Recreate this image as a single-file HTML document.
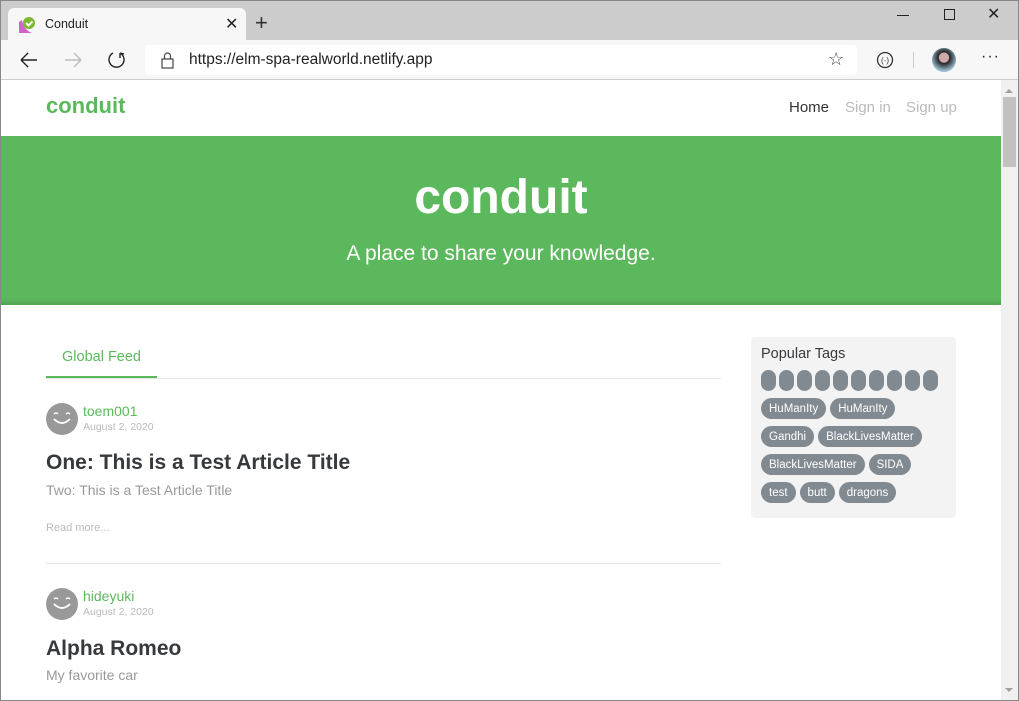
<!DOCTYPE html>
<html><head><meta charset="utf-8"><style>
*{margin:0;padding:0;box-sizing:border-box}
body{width:1019px;height:701px;overflow:hidden;font-family:"Liberation Sans",sans-serif;background:#fff;position:relative}
.a{position:absolute}
.tag{display:flex;align-items:center;background:#818a91;color:#fff;border-radius:11px;font-size:11.5px;padding:0 8px;height:21px}
.row{display:flex;gap:4px;margin-bottom:7px}
</style></head><body>
<div class="a" style="left:0;top:0;width:1019px;height:40px;background:#cccccc"></div>
<div class="a" style="left:8px;top:8px;width:238px;height:33px;background:#f7f7f7;border-radius:6px 6px 0 0"></div>
<svg class="a" style="left:18px;top:16px" width="18" height="18"><path d="M1 6 L1 17 L14 17 Q6 14 4 4 Z" fill="#d065c8"/><circle cx="11" cy="7" r="6" fill="#7cb82f"/><path d="M8 7 l2.5 2.5 4-4" stroke="#fff" stroke-width="2" fill="none"/></svg>
<div class="a" style="left:45px;top:17px;font-size:12.5px;color:#222">Conduit</div>
<div class="a" style="left:225px;top:14px;font-size:16px;color:#222">✕</div>
<div class="a" style="left:255px;top:10px;font-size:22px;color:#333;font-weight:300">+</div>
<div class="a" style="left:897px;top:15px;width:12px;border-top:1px solid #222"></div>
<div class="a" style="left:944px;top:9px;width:11px;height:11px;border:1px solid #222"></div>
<div class="a" style="left:987px;top:4px;font-size:16px;color:#222">✕</div>
<div class="a" style="left:0;top:40px;width:1019px;height:40px;background:#f7f7f7;border-bottom:1px solid #ccc"></div>
<svg class="a" style="left:18px;top:50px" width="22" height="20"><path d="M3 10 H19 M3 10 L10 3 M3 10 L10 17" stroke="#222" stroke-width="1.4" fill="none"/></svg>
<svg class="a" style="left:62px;top:50px" width="22" height="20"><path d="M3 10 H19 M19 10 L12 3 M19 10 L12 17" stroke="#bbb" stroke-width="1.4" fill="none"/></svg>
<svg class="a" style="left:106px;top:49px" width="22" height="22"><path d="M14 4 A7.5 7.5 0 1 1 7 4 M14 4 L14 9 M14 4 L18 5" stroke="#222" stroke-width="1.4" fill="none"/></svg>
<div class="a" style="left:145px;top:45px;width:712px;height:30px;background:#fff;border-radius:4px"></div>
<svg class="a" style="left:160px;top:51px" width="16" height="18"><rect x="2" y="8" width="11" height="9" fill="none" stroke="#444" stroke-width="1.2"/><path d="M4.5 8 V5 a3 3 0 0 1 6 0 V8" fill="none" stroke="#444" stroke-width="1.2"/></svg>
<div class="a" style="left:189px;top:51px;font-size:15.5px;color:#222">https://elm-spa-realworld.netlify.app</div>
<div class="a" style="left:828px;top:49px;font-size:18px;color:#444">☆</div>
<svg class="a" style="left:875px;top:50px" width="20" height="20"><circle cx="10" cy="10" r="7.5" fill="none" stroke="#333" stroke-width="1.3"/><text x="10" y="13" font-size="8" text-anchor="middle" fill="#333">(·)</text></svg>
<div class="a" style="left:913px;top:52px;height:16px;border-left:1px solid #ccc"></div>
<div class="a" style="left:932px;top:48px;width:24px;height:24px;border-radius:50%;background:radial-gradient(circle at 50% 40%,#caa 0 25%,#222 30%,#9bc 70%)"></div>
<div class="a" style="left:981px;top:48px;font-size:16px;color:#222;letter-spacing:1px">···</div>
<div class="a" style="left:1001px;top:80px;width:17px;height:621px;background:#f0f0f0"></div>
<div class="a" style="left:1003px;top:97px;width:13px;height:70px;background:#c1c1c1"></div>
<div class="a" style="left:1005px;top:85px;width:0;height:0;border:4px solid transparent;border-bottom-color:#a0a0a0"></div>
<div class="a" style="left:1005px;top:688px;width:0;height:0;border:4px solid transparent;border-top-color:#a0a0a0"></div>
<div class="a" style="left:46px;top:93px;font-size:22px;font-weight:bold;color:#5cb85c">conduit</div>
<div class="a" style="left:789px;top:99px;font-size:15px;color:#333">Home</div>
<div class="a" style="left:845px;top:99px;font-size:15px;color:#bbb">Sign in</div>
<div class="a" style="left:906px;top:99px;font-size:15px;color:#bbb">Sign up</div>
<div class="a" style="left:1px;top:136px;width:1000px;height:169px;background:#5cb85c;box-shadow:inset 0 -6px 6px -4px rgba(0,0,0,.15)"></div>
<div class="a" style="left:1px;top:170px;width:1000px;text-align:center;font-size:48px;font-weight:bold;color:#fff">conduit</div>
<div class="a" style="left:1px;top:242px;width:1000px;text-align:center;font-size:21px;color:#fff">A place to share your knowledge.</div>
<div class="a" style="left:62px;top:349px;font-size:14.5px;color:#5cb85c">Global Feed</div>
<div class="a" style="left:46px;top:378px;width:675px;border-top:1px solid #e5e5e5"></div>
<div class="a" style="left:46px;top:376px;width:111px;border-top:2px solid #5cb85c"></div>
<svg class="a" style="left:46px;top:403px" width="32" height="32"><circle cx="16" cy="16" r="16" fill="#999"/><path d="M8 16 q8 8 16 0" stroke="#fff" stroke-width="1.8" fill="none"/><path d="M8 11 q2-2 4 0 M20 11 q2-2 4 0" stroke="#fff" stroke-width="1.5" fill="none"/></svg>
<div class="a" style="left:83px;top:403px;font-size:14px;color:#5cb85c">toem001</div>
<div class="a" style="left:83px;top:421px;font-size:10.5px;color:#bbb">August 2, 2020</div>
<div class="a" style="left:46px;top:451px;font-size:21px;font-weight:bold;color:#373a3c">One: This is a Test Article Title</div>
<div class="a" style="left:46px;top:482px;font-size:14px;color:#999">Two: This is a Test Article Title</div>
<div class="a" style="left:46px;top:522px;font-size:11px;color:#bbb">Read more...</div>
<div class="a" style="left:46px;top:563px;width:675px;border-top:1px solid #e5e5e5"></div>
<svg class="a" style="left:46px;top:588px" width="32" height="32"><circle cx="16" cy="16" r="16" fill="#999"/><path d="M8 16 q8 8 16 0" stroke="#fff" stroke-width="1.8" fill="none"/><path d="M8 11 q2-2 4 0 M20 11 q2-2 4 0" stroke="#fff" stroke-width="1.5" fill="none"/></svg>
<div class="a" style="left:83px;top:588px;font-size:14px;color:#5cb85c">hideyuki</div>
<div class="a" style="left:83px;top:606px;font-size:10.5px;color:#bbb">August 2, 2020</div>
<div class="a" style="left:46px;top:637px;font-size:21px;font-weight:bold;color:#373a3c">Alpha Romeo</div>
<div class="a" style="left:46px;top:667px;font-size:14px;color:#999">My favorite car</div>
<div class="a" style="left:751px;top:337px;width:205px;height:181px;background:#f3f3f3;border-radius:4px;padding:9px 0 0 10px">
<div style="font-size:14.5px;color:#373a3c;margin-bottom:8px">Popular Tags</div>
<div class="row" style="gap:3px"><span class="tag" style="width:15px;padding:0"></span><span class="tag" style="width:15px;padding:0"></span><span class="tag" style="width:15px;padding:0"></span><span class="tag" style="width:15px;padding:0"></span><span class="tag" style="width:15px;padding:0"></span><span class="tag" style="width:15px;padding:0"></span><span class="tag" style="width:15px;padding:0"></span><span class="tag" style="width:15px;padding:0"></span><span class="tag" style="width:15px;padding:0"></span><span class="tag" style="width:15px;padding:0"></span></div>
<div class="row"><span class="tag">HuManIty</span><span class="tag">HuManIty</span></div>
<div class="row"><span class="tag">Gandhi</span><span class="tag">BlackLivesMatter</span></div>
<div class="row"><span class="tag">BlackLivesMatter</span><span class="tag">SIDA</span></div>
<div class="row"><span class="tag">test</span><span class="tag">butt</span><span class="tag">dragons</span></div>
</div>
<div class="a" style="left:0;top:0;width:1019px;height:701px;border:1px solid #888;pointer-events:none"></div>
</body></html>
